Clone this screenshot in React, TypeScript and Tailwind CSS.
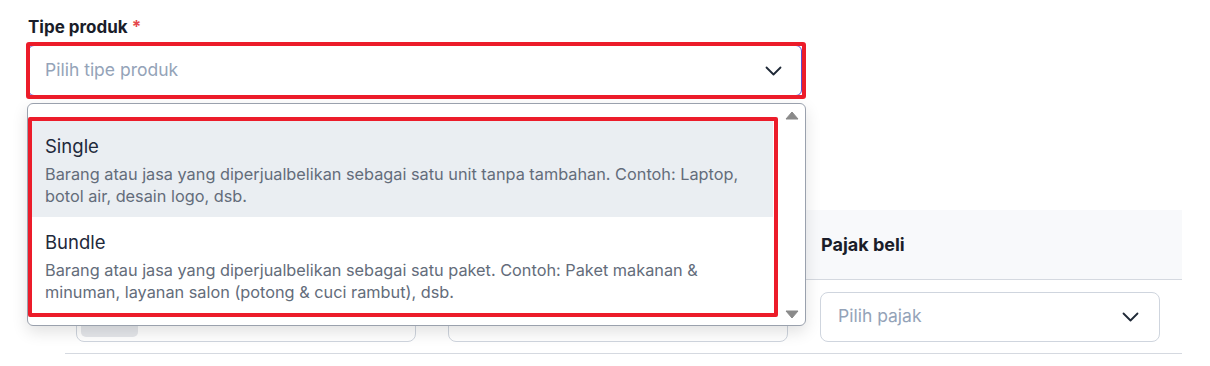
import React from "react";

const options = [
  {
    title: "Single",
    desc: "Barang atau jasa yang diperjualbelikan sebagai satu unit tanpa tambahan. Contoh: Laptop, botol air, desain logo, dsb.",
  },
  {
    title: "Bundle",
    desc: "Barang atau jasa yang diperjualbelikan sebagai satu paket. Contoh: Paket makanan & minuman, layanan salon (potong & cuci rambut), dsb.",
  },
];

function Chevron() {
  return (
    <svg width="17" height="10" viewBox="0 0 17 10" fill="none" className="text-[#1f2937]">
      <path d="M1.5 1.5 L8.5 8.5 L15.5 1.5" stroke="currentColor" strokeWidth="1.8" strokeLinecap="round" strokeLinejoin="round" />
    </svg>
  );
}

function Triangle({ up }: { up?: boolean }) {
  return (
    <svg width="14" height="9" viewBox="0 0 14 9">
      <path d={up ? "M7 1 L13 8 L1 8 Z" : "M1 1 L13 1 L7 8 Z"} fill="#8a8a8a" stroke="#8a8a8a" strokeLinejoin="round" strokeWidth="1" />
    </svg>
  );
}

export default function App() {
  return (
    <div
      className="relative h-[366px] w-[1210px] overflow-hidden bg-white"
      style={{ fontFamily: "Inter, 'Noto Sans', sans-serif" }}
    >
      <div className="pl-[28px] pt-[16px]">
        {/* Field */}
        <label className="block text-[17px] font-bold leading-[22px] text-[#1a1d29]">
          Tipe produk <span className="text-[#e5484d]">*</span>
        </label>
        <div className="mt-[7px] flex h-[51px] w-[774px] items-center justify-between rounded-[6px] border border-[#5a4fcf] bg-white pl-[16px] pr-[19px]">
          <span className="text-[17.5px] text-[#94a3b8]">Pilih tipe produk</span>
          <Chevron />
        </div>

        {/* Table behind */}
        <div className="ml-[37px] mt-[114px] w-[1117px]">
          <div className="grid h-[70px] grid-cols-3 items-center gap-[32px] border-b border-[#d5d9e0] bg-[#f8f9fb] pl-[11px] pr-[22px]">
            <span />
            <span />
            <span className="pl-[1px] text-[18px] font-bold text-[#1a1d29]">Pajak beli</span>
          </div>
          <div className="grid h-[74px] grid-cols-3 items-center gap-[32px] border-b border-[#d5d9e0] pl-[11px] pr-[22px]">
            <div className="flex h-[50px] items-center rounded-[8px] border border-[#cfd5de] p-[4px]">
              <div className="flex h-full w-[57px] items-center justify-center rounded-[5px] bg-[#e5e7eb] text-[15px] text-[#1f2937]">
                Rp
              </div>
            </div>
            <div className="h-[50px] rounded-[8px] border border-[#cfd5de]" />
            <div className="flex h-[50px] items-center justify-between rounded-[8px] border border-[#cfd5de] pl-[17px] pr-[20px]">
              <span className="text-[17.5px] text-[#94a3b8]">Pilih pajak</span>
              <Chevron />
            </div>
          </div>
        </div>
      </div>

      {/* Dropdown menu */}
      <div className="absolute left-[27px] top-[103px] flex h-[223px] w-[779px] rounded-[6px] border border-[#9aa1ad] bg-white shadow-[0_6px_16px_rgba(0,0,0,0.12)]">
        <div className="flex-1 pl-[3px] pr-[8px] pt-[17px]">
          {options.map((o, i) => (
            <div
              key={o.title}
              className={`pb-[10px] pl-[14px] pr-[26px] pt-[13px] ${i === 0 ? "bg-[#eaeef2]" : "bg-white"}`}
            >
              <div className="text-[18.5px] leading-[24px] text-[#1e293b]">{o.title}</div>
              <div className="mt-[5px] text-[16.3px] leading-[22px] text-[#636c7a]">{o.desc}</div>
            </div>
          ))}
        </div>
        <div className="flex w-[24px] flex-col items-center justify-between pb-[6px] pr-[2px] pt-[7px]">
          <Triangle up />
          <Triangle />
        </div>
      </div>

      {/* Annotation boxes */}
      <div className="pointer-events-none absolute left-[26px] top-[42px] h-[57px] w-[780px] rounded-[3px] border-[4px] border-[#ec1c2a]" />
      <div className="pointer-events-none absolute left-[28px] top-[117px] h-[200px] w-[750px] rounded-[2px] border-[4px] border-[#ec1c2a]" />
    </div>
  );
}
